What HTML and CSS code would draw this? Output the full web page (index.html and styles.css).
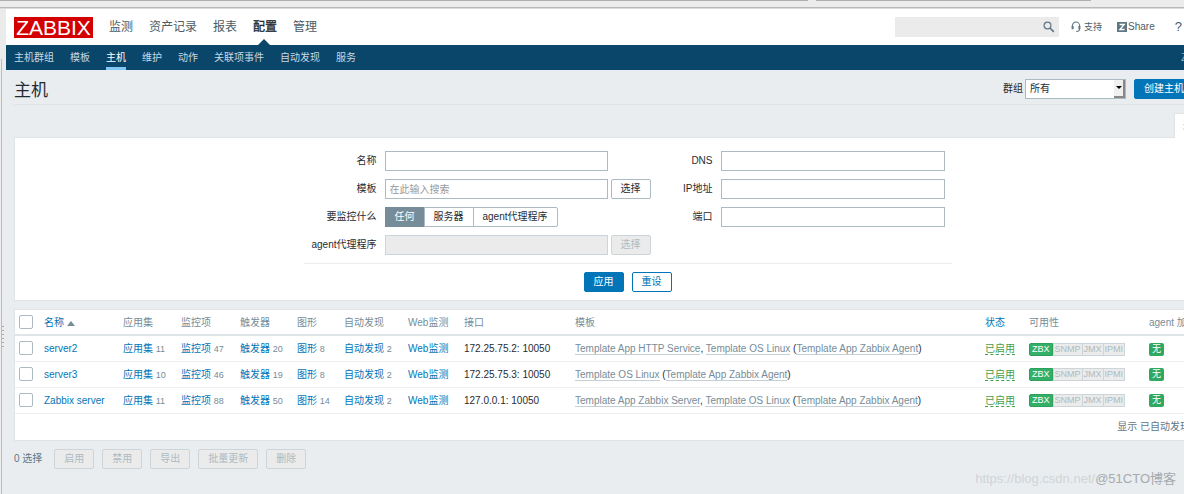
FILE: index.html
```html
<!DOCTYPE html>
<html lang="zh-CN">
<head>
<meta charset="utf-8">
<title>主机</title>
<link rel="stylesheet" href="styles.css">
</head>
<body>
<div class="window-top"><span class="tab-edge tab-edge-main"></span><span class="tab-edge tab-edge-side"></span></div>
<div class="window">
  <div class="sidebar-edge"><span class="grip"></span></div>
  <div class="app">
    <header class="header">
      <a class="logo" href="#">ZABBIX</a>
      <nav class="menu">
        <a href="#">监测</a>
        <a href="#">资产记录</a>
        <a href="#">报表</a>
        <a href="#" class="active">配置</a>
        <a href="#">管理</a>
      </nav>
      <div class="tools">
        <div class="search">
          <input type="text" aria-label="search">
          <button type="button" aria-label="search">
            <svg width="12" height="12" viewBox="0 0 12 12" fill="none" stroke="#5f7785"><circle cx="4.5" cy="4.5" r="3.4" stroke-width="1.2"/><path d="M7 7l3.8 3.8" stroke-width="1.7"/></svg>
          </button>
        </div>
        <a class="tool" href="#"><svg width="10" height="12" viewBox="0 0 10 12" fill="none" stroke="#5f7785"><path d="M1.4 6V4.8a3.6 3.8 0 0 1 7.2 0V6" stroke-width="1.1"/><path d="M1.6 5v3.2M8.4 5v3.2" stroke-width="2"/><path d="M8.6 8c0 1.600-1 2.500-3.400 2.500" stroke-width="1.1"/></svg>支持</a>
        <a class="tool share" href="#"><svg width="10" height="10" viewBox="0 0 10 10"><path fill="#5f7785" d="M0 0h10v10H0z"/><path d="M2.600 2.500h4.600L2.900 7.500h4.600" fill="none" stroke="#fff" stroke-width="1.300"/></svg>Share</a>
        <a class="tool help" href="#">?</a>
      </div>
    </header>
    <nav class="subnav">
      <a href="#">主机群组</a>
      <a href="#">模板</a>
      <a href="#" class="active">主机</a>
      <a href="#">维护</a>
      <a href="#">动作</a>
      <a href="#">关联项事件</a>
      <a href="#">自动发现</a>
      <a href="#">服务</a>
      <span class="server">Zabbix</span>
    </nav>
    <main class="content">
      <div class="title-row">
        <h1>主机</h1>
        <div class="title-tools">
          <label for="group">群组</label>
          <span class="select"><select id="group"><option>所有</option></select><span class="arrow"><svg width="6" height="3" viewBox="0 0 6 3"><path d="M0 0h6L3 3z"/></svg></span></span>
          <button type="button" class="btn primary create">创建主机</button>
        </div>
      </div>
      <div class="filter-tab"><button type="button">过滤器</button></div>
      <form class="filter">
        <div class="fields">
          <div class="col left">
            <label for="name">名称</label><div class="row"><input id="name" type="text"></div>
            <label for="tpl">模板</label><div class="row"><input id="tpl" type="text" placeholder="在此输入搜索"><button type="button" class="btn dark">选择</button></div>
            <span class="label" id="mon">要监控什么</span>
            <div class="segments" role="radiogroup" aria-labelledby="mon">
              <label><input type="radio" name="mon" checked>任何</label><label><input type="radio" name="mon">服务器</label><label><input type="radio" name="mon">agent代理程序</label>
            </div>
            <label for="proxy">agent代理程序</label><div class="row"><input id="proxy" type="text" disabled><button type="button" class="btn" disabled>选择</button></div>
          </div>
          <div class="col right">
            <label for="dns">DNS</label><input id="dns" type="text">
            <label for="ip">IP地址</label><input id="ip" type="text">
            <label for="port">端口</label><input id="port" type="text">
          </div>
        </div>
        <div class="actions"><button type="button" class="btn primary">应用</button><button type="button" class="btn">重设</button></div>
      </form>
      <div class="panel">
        <table class="hosts">
          <colgroup><col class="c-check"><col class="c-name"><col class="c-apps"><col class="c-items"><col class="c-trig"><col class="c-graph"><col class="c-disc"><col class="c-web"><col class="c-if"><col><col class="c-status"><col class="c-avail"><col class="c-agent"></colgroup>
          <thead><tr>
            <th><input type="checkbox" aria-label="全部"></th><th><a href="#">名称 <span class="sort"></span></a></th><th>应用集</th><th>监控项</th><th>触发器</th><th>图形</th><th>自动发现</th><th>Web监测</th><th>接口</th><th>模板</th><th><a href="#">状态</a></th><th>可用性</th><th>agent 加密</th>
          </tr></thead>
          <tbody>
            <tr><td><input type="checkbox" aria-label="server2"></td><td><a href="#">server2</a></td><td><a href="#">应用集</a> <small>11</small></td><td><a href="#">监控项</a> <small>47</small></td><td><a href="#">触发器</a> <small>20</small></td><td><a href="#">图形</a> <small>8</small></td><td><a href="#">自动发现</a> <small>2</small></td><td><a href="#">Web监测</a></td><td>172.25.75.2: 10050</td><td><a class="tpl" href="#">Template App HTTP Service</a>, <a class="tpl" href="#">Template OS Linux</a> (<a class="tpl" href="#">Template App Zabbix Agent</a>)</td><td><a class="on" href="#">已启用</a></td><td><span class="avail"><b>ZBX</b><i>SNMP</i><i>JMX</i><i>IPMI</i></span></td><td><span class="none">无</span></td></tr>
            <tr><td><input type="checkbox" aria-label="server3"></td><td><a href="#">server3</a></td><td><a href="#">应用集</a> <small>10</small></td><td><a href="#">监控项</a> <small>46</small></td><td><a href="#">触发器</a> <small>19</small></td><td><a href="#">图形</a> <small>8</small></td><td><a href="#">自动发现</a> <small>2</small></td><td><a href="#">Web监测</a></td><td>172.25.75.3: 10050</td><td><a class="tpl" href="#">Template OS Linux</a> (<a class="tpl" href="#">Template App Zabbix Agent</a>)</td><td><a class="on" href="#">已启用</a></td><td><span class="avail"><b>ZBX</b><i>SNMP</i><i>JMX</i><i>IPMI</i></span></td><td><span class="none">无</span></td></tr>
            <tr><td><input type="checkbox" aria-label="Zabbix server"></td><td><a href="#">Zabbix server</a></td><td><a href="#">应用集</a> <small>11</small></td><td><a href="#">监控项</a> <small>88</small></td><td><a href="#">触发器</a> <small>50</small></td><td><a href="#">图形</a> <small>14</small></td><td><a href="#">自动发现</a> <small>2</small></td><td><a href="#">Web监测</a></td><td>127.0.0.1: 10050</td><td><a class="tpl" href="#">Template App Zabbix Server</a>, <a class="tpl" href="#">Template OS Linux</a> (<a class="tpl" href="#">Template App Zabbix Agent</a>)</td><td><a class="on" href="#">已启用</a></td><td><span class="avail"><b>ZBX</b><i>SNMP</i><i>JMX</i><i>IPMI</i></span></td><td><span class="none">无</span></td></tr>
          </tbody>
        </table>
        <div class="stats">显示 已自动发现</div>
      </div>
      <div class="bulk">
        <span>0 选择</span>
        <button type="button" class="btn" disabled>启用</button>
        <button type="button" class="btn" disabled>禁用</button>
        <button type="button" class="btn" disabled>导出</button>
        <button type="button" class="btn" disabled>批量更新</button>
        <button type="button" class="btn" disabled>删除</button>
      </div>
    </main>
  </div>
</div>
<div class="marks"><span class="mark-url">https://blog.csdn.net/</span><span class="mark-site">@51CTO博客</span></div>
</body>
</html>
```
FILE: styles.css
```css
* { box-sizing: border-box; }
body {
  margin: 0;
  height: 100vh;
  overflow: hidden;
  display: flex;
  flex-direction: column;
  background: #ebebeb;
  color: #1f2c33;
  font: 10px/14px "Liberation Sans", "Noto Sans CJK SC", sans-serif;
  position: relative;
}
a { color: #0275b8; text-decoration: none; }
input, button, select { font: inherit; color: inherit; margin: 0; }

.window-top { flex: none; height: 9px; display: flex; gap: 8px; background: #edecec; border-bottom: 1px solid #dcdcdc; box-shadow: inset 0 -1px #b9b7b8; }
.tab-edge { height: 1px; background: #b0aeaf; }
.tab-edge-main { flex: 808; }
.tab-edge-side { flex: 275; margin-right: 93px; }

.window { flex: 1; display: flex; min-height: 0; overflow: hidden; }
.sidebar-edge { flex: none; width: 6px; padding-top: 317px; background: linear-gradient(#ebebeb 50px, transparent 50px), linear-gradient(90deg, #eee 1px, #bbb 1px, #bbb 2px, #e9edf0 2px); }
.grip { display: block; width: 2px; height: 22px; margin-left: 2px; background: repeating-linear-gradient(#aaa 0 1px, #eee 1px 4px); }
.app { flex: none; width: calc(100% + 60px); background: #e9edf0; }

.header { display: flex; align-items: center; height: 36px; padding-left: 8px; background: #fff; }
.logo { width: 79px; height: 21px; background: #d40000; color: #fff; font-size: 21px; line-height: 22px; text-align: center; }
.menu { display: flex; gap: 16px; margin-left: 16px; align-self: stretch; font-size: 12px; line-height: 37px; }
.menu a { color: #4b5c66; position: relative; }
.menu .active { color: #1f2c33; -webkit-text-stroke: 0.3px #1f2c33; }
.menu .active::after { content: ""; position: absolute; left: 5px; bottom: 0; border: 6px solid transparent; border-top: 0; border-bottom-color: #0a466a; }
.tools { display: flex; align-items: center; margin-left: auto; padding-right: 68px; }
.search { display: flex; align-items: center; width: 164px; height: 20px; margin-right: 12px; background: #ebebeb; }
.search input { flex: 1; min-width: 0; height: 20px; border: 0; background: none; }
.search button { border: 0; background: none; padding: 0 4px 0 0; display: flex; }
.tool { display: flex; align-items: center; gap: 3px; color: #4b5c66; font-size: 9px; }
.share { margin-left: 15px; gap: 1px; font-size: 10px; }
.help { margin-left: 20px; font-size: 13px; }

.subnav { display: flex; gap: 16px; height: 25px; padding-left: 8px; background: #0a466a; line-height: 25px; }
.subnav a { color: #c8d8e2; }
.subnav .active { color: #fff; border-bottom: 3px solid #82c8f5; }
.server { margin-left: auto; padding-right: 39px; color: #8fb0c4; }

.content { padding: 0 9px 0 8px; }
.title-row { display: flex; align-items: center; justify-content: space-between; height: 35px; padding-top: 3px; border-bottom: 1px solid #dfe4e7; }
h1 { margin: 0; padding-top: 4px; font-size: 17px; line-height: 24px; font-weight: 400; }
.title-tools { display: flex; align-items: center; padding-right: 47px; }
.select { position: relative; width: 101px; margin: 0 8px 0 2px; }
.select select { appearance: none; display: block; width: 100%; height: 20px; padding: 0 4px; background: #fff; border: 1px solid #acbbc2; }
.arrow { position: absolute; right: 1px; top: 1px; width: 11px; height: 18px; display: flex; align-items: center; justify-content: center; background: #f0f0f0; border: solid #888; border-width: 0 2px 2px 0; pointer-events: none; }

.btn { min-width: 40px; height: 20px; padding: 0 9px; border: 1px solid #0275b8; border-radius: 2px; background: #fff; color: #0275b8; line-height: 18px; white-space: nowrap; }
.btn.primary { background: #0275b8; color: #fff; }
.btn.dark { color: #1f2c33; border-color: #acbbc2; }
.btn:disabled { background: #ebebeb; border-color: #ccd5d9; color: #acbbc2; }
.create { width: 60px; }

.filter-tab { display: flex; justify-content: flex-end; height: 32px; padding-top: 8px; }
.filter-tab button { position: relative; width: 67px; height: 25px; padding: 0 8px; text-align: left; border: 1px solid #dfe4e7; border-bottom: 0; background: #fff; color: #768d99; }
.filter { padding: 13px 0 8px; background: #fff; border: 1px solid #dfe4e7; }
.fields { display: flex; width: 648px; margin: 0 auto; padding-bottom: 8px; border-bottom: 1px solid #ebeef0; }
.col { display: grid; align-items: center; align-content: start; gap: 8px; }
.left { grid-template-columns: 73px 267px; }
.right { grid-template-columns: 61px 224px; }
.col > label, .label { text-align: right; white-space: nowrap; }
.row { display: flex; gap: 3px; }
.row input { width: 223px; }
.fields input[type="text"] { height: 20px; padding: 0 4px; border: 1px solid #acbbc2; background: #fff; }
.fields input:disabled { background: #ebebeb; border-color: #ccd5d9; }
.fields ::placeholder { color: #999; }
.segments { display: flex; }
.segments label { height: 20px; padding: 0 9px; border: 1px solid #acbbc2; margin-right: -1px; line-height: 18px; }
.segments label:last-child { border-radius: 0 2px 2px 0; }
.segments label:has(:checked) { background: #768d99; border-color: #768d99; color: #fff; }
.segments input { appearance: none; position: absolute; }
.actions { display: flex; justify-content: center; gap: 8px; padding-top: 8px; }

.panel { margin-top: 8px; background: #fff; border: 1px solid #dfe4e7; }
.hosts { width: 100%; table-layout: fixed; border-collapse: collapse; }
.hosts th, .hosts td { padding: 1px 0 0; text-align: left; font-weight: 400; white-space: nowrap; }
.hosts th { height: 25px; color: #768d99; border-bottom: 2px solid #dfe4e7; }
.hosts td { height: 26px; border-bottom: 1px solid #ebeef0; }
.hosts th:first-child, .hosts td:first-child { padding: 0 0 0 4px; }
.hosts input { appearance: none; display: block; width: 14px; height: 14px; border: 1px solid #acbbc2; border-radius: 2px; background: #fff; }
.c-check { width: 29px; } .c-name { width: 79px; } .c-apps { width: 58px; } .c-items { width: 59px; }
.c-trig { width: 57px; } .c-graph { width: 47px; } .c-disc { width: 64px; } .c-web { width: 56px; }
.c-if { width: 111px; } .c-status { width: 44px; } .c-avail { width: 120px; } .c-agent { width: 91px; }
.sort { display: inline-block; border: 4px solid transparent; border-top: 0; border-bottom: 5px solid #768d99; }
small { font-size: 9px; color: #768d99; }
.tpl { color: #768d99; border-bottom: 1px solid #c5d0d6; }
.on { color: #429e47; border-bottom: 1px dashed #429e47; }
.avail { display: inline-flex; vertical-align: middle; height: 13px; font-size: 9px; line-height: 11px; }
.avail b, .avail i { padding: 0 1px; border: 1px solid #ccd5d9; margin-right: -1px; background: #ebebeb; color: #acbbc2; font-weight: 400; font-style: normal; }
.avail b { padding: 0 2px; background: #34af67; border-color: #2f9f5e; color: #fff; margin-right: 0; border-radius: 2px 0 0 2px; }
.none { display: inline-block; vertical-align: middle; height: 13px; padding: 0 3px; border-radius: 2px; background: #2fa862; color: #fff; font-size: 9px; line-height: 13px; }
.stats { padding: 6px 50px 6px 0; text-align: right; color: #5f7785; }
.bulk { display: flex; align-items: center; gap: 8px; padding-top: 8px; color: #5f7785; }
.bulk span { margin-right: 4px; }

.marks { position: absolute; right: 8px; bottom: 6px; display: flex; font-size: 13px; line-height: 18px; white-space: nowrap; }
.mark-url { color: #d0d4d7; }
.mark-site { color: #a6aaad; }
```
